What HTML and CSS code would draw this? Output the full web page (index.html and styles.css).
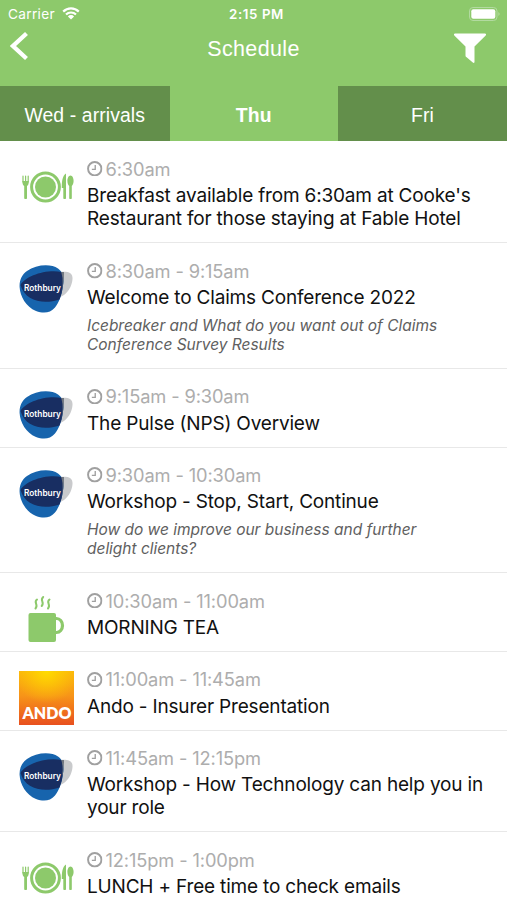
FILE: index.html
```html
<!DOCTYPE html>
<html lang="en">
<head>
<meta charset="utf-8">
<title>Schedule</title>
<link rel="stylesheet" href="styles.css">
</head>
<body>
<svg class="defs" aria-hidden="true">
  <defs>
    <linearGradient id="ando-down" x1="0" y1="0" x2="0" y2="1"><stop offset="0" stop-color="#fbb50c"/><stop offset=".45" stop-color="#f79518"/><stop offset="1" stop-color="#e8501f"/></linearGradient>
    <radialGradient id="ando-glow" cx=".5" cy="0" r=".6"><stop offset="0" stop-color="#ffdc00"/><stop offset="1" stop-color="#ffd000" stop-opacity="0"/></radialGradient>
    <symbol id="clock" viewBox="0 0 16 16"><circle cx="8" cy="8" r="6.9" fill="none" stroke="currentColor" stroke-width="2"/><path d="M8.500 4v4.600H5" fill="none" stroke="currentColor" stroke-width="1.400"/></symbol>
    <symbol id="meal" viewBox="0 0 54 34">
      <circle cx="24.500" cy="17" r="13.900" fill="none" stroke="#8dc96b" stroke-width="3"/>
      <circle cx="24.500" cy="17" r="10.500" fill="#8dc96b"/>
      <path d="M2 6v6M4.600 6v6M7.200 6v6" stroke="#8dc96b" stroke-width="1.200" stroke-linecap="round"/>
      <path d="M1.400 11h6.400c0 3.500-1 4.500-1.800 5V28.500q-1.300 1.200-2.800 0V16c-.8-.5-1.800-1.500-1.800-5Z" fill="#8dc96b"/>
      <path d="M45 3.500v25q-1.300 1.200-2.700 0V18h-1.500c0-6 .5-12.500 4.200-14.500Z" fill="#8dc96b"/>
      <path d="M49.500 5.500c2 0 3.100 3 3.100 5.500s-1.100 4.500-1.800 5v12.500q-1.300 1.200-2.600 0V16c-.8-.5-1.800-2.500-1.800-5s1.100-5.500 3.100-5.500Z" fill="#8dc96b"/>
    </symbol>
    <symbol id="rothbury" viewBox="0 0 54 48">
      <path d="M40 7c8-1 14 0 13.500 7S49 29 41 32Z" fill="#c9cacc"/>
      <path d="M8 6C17-.5 32-1.500 39 3.500c6 4 6 11 5 17-1 9-4 17-8 22-5 6-12 6-19 3.500C7 42 1 31 .6 22 .3 15 3 9.500 8 6Z" fill="#1764ad"/>
      <path d="M1.500 20C6 11 27 4 42.500 7q2.200 5 1.500 13-.8 8-3.500 14.500C24 40 6 36 1.500 20Z" fill="#182e62"/>
      <path d="M42.300 7q2.200-.2 2.700 0 .3 12-3.800 24Q45.500 18 42.300 7Z" fill="#70767f"/>
      <text x="5" y="25.800" class="roth-text" textLength="37" lengthAdjust="spacingAndGlyphs">Rothbury</text>
    </symbol>
    <symbol id="mug" viewBox="0 0 54 48">
      <rect x="9.500" y="18" width="27.500" height="29" rx="2" fill="#8dc96b"/>
      <path d="M36 23.500h1.500a6 7 0 0 1 0 14H36" fill="none" stroke="#8dc96b" stroke-width="3.200"/>
      <path d="M18 4.500c-4 3 2 5-1.500 9M24.200 2c-4 3.500 2 5-1.500 9M30.500 4.500c-4 3 2 5-1.500 9" fill="none" stroke="#8dc96b" stroke-width="2" stroke-linecap="round"/>
    </symbol>
    <symbol id="ando" viewBox="0 0 55 54">
      <path d="M0 0h55v54H0Z" fill="url(#ando-down)"/><path d="M0 0h55v54H0Z" fill="url(#ando-glow)"/>
      <text x="3.500" y="48" class="ando-text" textLength="49" lengthAdjust="spacingAndGlyphs">ANDO</text>
    </symbol>
  </defs>
</svg>
<header class="header">
  <div class="status">
    <div class="carrier"><span class="carrier-name">Carrier</span>
      <svg class="wifi" viewBox="0 0 18 13"><path d="M1.200 4.600a11 11 0 0 1 15.600 0M4 7.600a7 7 0 0 1 10 0" fill="none" stroke="#fff" stroke-width="2.200"/><path d="M9 12.600 5.900 9.400a4.400 4.400 0 0 1 6.200 0Z" fill="#fff"/></svg>
    </div>
    <span class="now">2:15 PM</span>
    <svg class="battery" viewBox="0 0 32 14"><rect x=".5" y=".5" width="27.500" height="13" rx="3.500" fill="none" stroke="#b2daa0"/><rect x="2.300" y="2.300" width="24" height="9.400" rx="2" fill="#fff"/><path d="M29.500 5q2 2 0 4Z" fill="#c0e2aa"/></svg>
  </div>
  <div class="nav">
    <svg class="back" viewBox="0 0 19 30"><path d="M16.500 2.500 3 15l13.500 12.500" fill="none" stroke="#fff" stroke-width="4.300"/></svg>
    <h1 class="heading">Schedule</h1>
    <svg class="filter" viewBox="0 0 34 31"><path d="M1.800.5h30.400q1.600.4.500 2L21.500 13.500V29q-.3 1.500-1.700.6l-6.500-5.500q-.8-.6-.8-1.600v-9L1.300 2.500Q.2.900 1.800.5Z" fill="#fff"/></svg>
  </div>
</header>
<nav class="tabs">
  <div class="tab"><span>Wed - arrivals</span></div>
  <div class="tab active"><span>Thu</span></div>
  <div class="tab"><span>Fri</span></div>
</nav>
<main class="list">
  <article class="row">
    <div class="art"><svg class="meal"><use href="#meal"/></svg></div>
    <div class="body"><div class="time"><svg class="clock"><use href="#clock"/></svg><span>6:30am</span></div>
      <div class="title"><span>Breakfast available from 6:30am at Cooke's</span><br><span>Restaurant for those staying at Fable Hotel</span></div></div>
  </article>
  <article class="row">
    <div class="art"><svg class="roth"><use href="#rothbury"/></svg></div>
    <div class="body"><div class="time"><svg class="clock"><use href="#clock"/></svg><span>8:30am - 9:15am</span></div>
      <div class="title"><span>Welcome to Claims Conference 2022</span></div>
      <div class="desc"><span>Icebreaker and What do you want out of Claims</span><br><span>Conference Survey Results</span></div></div>
  </article>
  <article class="row">
    <div class="art"><svg class="roth"><use href="#rothbury"/></svg></div>
    <div class="body"><div class="time"><svg class="clock"><use href="#clock"/></svg><span>9:15am - 9:30am</span></div>
      <div class="title"><span>The Pulse (NPS) Overview</span></div></div>
  </article>
  <article class="row">
    <div class="art"><svg class="roth"><use href="#rothbury"/></svg></div>
    <div class="body"><div class="time"><svg class="clock"><use href="#clock"/></svg><span>9:30am - 10:30am</span></div>
      <div class="title"><span>Workshop - Stop, Start, Continue</span></div>
      <div class="desc"><span>How do we improve our business and further</span><br><span>delight clients?</span></div></div>
  </article>
  <article class="row">
    <div class="art"><svg class="mug"><use href="#mug"/></svg></div>
    <div class="body"><div class="time"><svg class="clock"><use href="#clock"/></svg><span>10:30am - 11:00am</span></div>
      <div class="title"><span>MORNING TEA</span></div></div>
  </article>
  <article class="row">
    <div class="art"><svg class="ando"><use href="#ando"/></svg></div>
    <div class="body"><div class="time"><svg class="clock"><use href="#clock"/></svg><span>11:00am - 11:45am</span></div>
      <div class="title"><span>Ando - Insurer Presentation</span></div></div>
  </article>
  <article class="row">
    <div class="art"><svg class="roth"><use href="#rothbury"/></svg></div>
    <div class="body"><div class="time"><svg class="clock"><use href="#clock"/></svg><span>11:45am - 12:15pm</span></div>
      <div class="title"><span>Workshop - How Technology can help you in</span><br><span>your role</span></div></div>
  </article>
  <article class="row">
    <div class="art"><svg class="meal"><use href="#meal"/></svg></div>
    <div class="body"><div class="time"><svg class="clock"><use href="#clock"/></svg><span>12:15pm - 1:00pm</span></div>
      <div class="title"><span>LUNCH + Free time to check emails</span></div></div>
  </article>
</main>
</body>
</html>
```
FILE: styles.css
```css
* { box-sizing: border-box; }
body { margin: 0; width: 507px; height: 900px; overflow: hidden; background: #fff; font-family: Inter, "Liberation Sans", sans-serif; }
svg { display: block; flex: none; }
.defs { position: absolute; width: 0; height: 0; }
.header { height: 86px; background: #8dc96b; color: #fff; }
.status { display: grid; grid-template-columns: 1fr auto 1fr; height: 27px; padding: 0 6px 0 8px; align-items: center; }
.carrier { display: flex; align-items: center; gap: 7px; font-size: 13.7px; letter-spacing: .3px; }
.wifi { width: 18px; height: 13px; }
.now { font-size: 13.3px; font-weight: 600; letter-spacing: .6px; margin-left: 4px; }
.battery { width: 32px; height: 14px; justify-self: end; }
.nav { display: grid; grid-template-columns: 1fr auto 1fr; align-items: center; height: 42px; padding: 0 20px 0 10px; }
.back { width: 19px; height: 30px; margin-top: -4px; }
.heading { margin: 1px 0 0 10px; font-family: "Liberation Sans", sans-serif; font-weight: 400; font-size: 21.5px; letter-spacing: .35px; line-height: 26px; }
.filter { width: 34px; height: 31px; justify-self: end; }
.tabs { display: grid; grid-template-columns: 169.5px 168.5px 169px; height: 55px; background: #8dc96b; color: #fff; font-family: "Liberation Sans", sans-serif; font-size: 19.4px; letter-spacing: .1px; }
.tab { display: flex; align-items: center; justify-content: center; padding-top: 3px; background: #638f4b; }
.tab.active { background: #8dc96b; font-weight: 700; }
.list { display: flex; flex-direction: column; }
.row { display: flex; flex: none; padding: 16px 0 12px 19px; border-bottom: 1px solid #e8e8e8; }
.row:first-child { padding-bottom: 12.5px; }
.art { width: 68px; height: 48px; flex: none; }
.body { flex: 1; white-space: nowrap; }
.time { display: flex; align-items: center; gap: 3px; height: 23px; font-size: 18.3px; letter-spacing: -.13px; color: #adadad; }
.clock { width: 15.5px; height: 15.5px; color: #a0a0a0; }
.title { font-size: 19px; line-height: 23px; letter-spacing: -.18px; color: #111; margin-top: 3.8px; }
.desc { margin-top: 8px; padding-bottom: 1.3px; font-size: 15.5px; line-height: 18.7px; letter-spacing: -.02px; font-style: italic; color: #606060; }
.meal { width: 54px; height: 34px; margin: 13px 0 0 2px; }
.roth { width: 54px; height: 48px; margin-top: 6px; }
.mug { width: 54px; height: 48px; margin-top: 6px; }
.ando { width: 55px; height: 54px; margin-top: 3px; }
.roth-text { font: 600 8.5px Inter, sans-serif; fill: #fff; }
.ando-text { font: 800 16.5px Lato, sans-serif; fill: #fff; }
```
